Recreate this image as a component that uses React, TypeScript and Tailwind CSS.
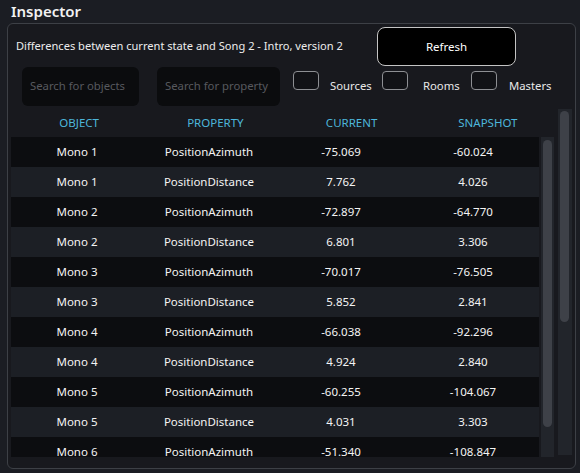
import React from 'react';

const rows = [
  ['Mono 1', 'PositionAzimuth', '-75.069', '-60.024'],
  ['Mono 1', 'PositionDistance', '7.762', '4.026'],
  ['Mono 2', 'PositionAzimuth', '-72.897', '-64.770'],
  ['Mono 2', 'PositionDistance', '6.801', '3.306'],
  ['Mono 3', 'PositionAzimuth', '-70.017', '-76.505'],
  ['Mono 3', 'PositionDistance', '5.852', '2.841'],
  ['Mono 4', 'PositionAzimuth', '-66.038', '-92.296'],
  ['Mono 4', 'PositionDistance', '4.924', '2.840'],
  ['Mono 5', 'PositionAzimuth', '-60.255', '-104.067'],
  ['Mono 5', 'PositionDistance', '4.031', '3.303'],
  ['Mono 6', 'PositionAzimuth', '-51.340', '-108.847'],
  ['Mono 6', 'PositionDistance', '3.912', '2.615'],
];

function Check({ label, labelWidth }: { label: string; labelWidth: string }) {
  return (
    <div className="flex h-[39px]">
      <div className="mt-[4px] h-[19px] w-[26px] rounded-[4px] border-[1.5px] border-[#8d8f93] bg-[#111216]" />
      <span className={`ml-[11px] flex items-center text-[11.3px] text-[#e8e8e8] ${labelWidth}`}>{label}</span>
    </div>
  );
}

export default function App() {
  return (
    <div className="h-[473px] w-[580px] overflow-hidden bg-[#1b1d23] font-['Noto_Sans',sans-serif] text-white">
      <div className="flex h-[23px] items-center pl-[11px] text-[15px] font-semibold leading-none text-[#f2f2f2]">
        Inspector
      </div>

      <div className="ml-[7px] flex h-[446px] w-[569px] rounded-[6px] border border-[#3d4046] bg-[#18191e]">
        <div className="w-[550px]">
          {/* header line */}
          <div className="mt-[3px] flex h-[39px] items-center">
            <p className="w-[369px] pl-[8px] text-[11.1px] text-[#ececec]">
              Differences between current state and Song 2 - Intro, version 2
            </p>
            <button
              type="button"
              className="h-[39px] w-[139px] rounded-[8px] border-[1.5px] border-[#c4c4c4] bg-black text-[11.5px] text-white"
            >
              Refresh
            </button>
          </div>

          {/* filters */}
          <div className="mt-[1px] flex pl-[14px]">
            <div className="flex h-[39px] w-[117px] items-center rounded-[6px] bg-[#0b0c0e] pl-[8px] text-[11.3px] text-[#57595e]">
              Search for objects
            </div>
            <div className="ml-[18px] flex h-[39px] w-[123px] items-center rounded-[6px] bg-[#0b0c0e] pl-[8px] text-[11.3px] text-[#57595e]">
              Search for property
            </div>
            <div className="ml-[13px] flex">
              <Check label="Sources" labelWidth="w-[52px]" />
              <Check label="Rooms" labelWidth="w-[52px] pl-[4px]" />
              <Check label="Masters" labelWidth="w-[50px] pl-[1px]" />
            </div>
          </div>

          {/* table header */}
          <div className="ml-[3px] mt-[3px] grid h-[28px] w-[545px] grid-cols-4 items-center text-center text-[11.5px] text-[#4db6da]">
            <span>OBJECT</span>
            <span>PROPERTY</span>
            <span>CURRENT</span>
            <span>SNAPSHOT</span>
          </div>

          {/* table body */}
          <div className="ml-[3px] flex h-[320px] overflow-hidden">
            <div className="w-[528px]">
              {rows.map((r, i) => (
                <div
                  key={i}
                  className={`grid h-[30px] grid-cols-4 items-center text-center text-[11.5px] text-[#f4f4f4] ${
                    i % 2 === 0 ? 'bg-[#0c0d10]' : 'bg-[#1c1f25]'
                  }`}
                >
                  {r.map((c, j) => (
                    <span key={j}>{c}</span>
                  ))}
                </div>
              ))}
            </div>
            <div className="ml-[2px] h-full w-[13px] bg-[#22252b] pl-[2px] pt-[3px]">
              <div className="h-[287px] w-[9px] rounded-full bg-[#3e4148]" />
            </div>
          </div>
        </div>

        {/* outer scrollbar */}
        <div className="mt-[85px] h-[346px] w-[14px] bg-[#22252b] pl-[2px] pt-[2px]">
          <div className="h-[211px] w-[9px] rounded-full bg-[#3e4148]" />
        </div>
      </div>
    </div>
  );
}
